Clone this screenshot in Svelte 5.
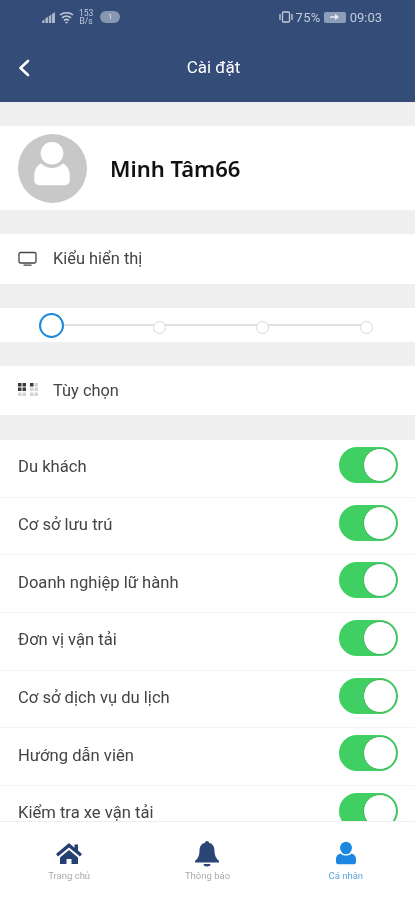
<script>
  const rows = ['Du khách','Cơ sở lưu trú','Doanh nghiệp lữ hành','Đơn vị vận tải','Cơ sở dịch vụ du lịch','Hướng dẫn viên','Kiểm tra xe vận tải'];
  const colsX = [1, 5.500, 13, 17.500];
  const rowsY = [0, 4.500, 9.500];
  const darkCells = ['0-0','1-0','0-1','1-1','2-0'];
</script>

<div class="app">
  <header class="top">
    <div class="status">
      <div class="st-left">
        <svg class="signal" width="13" height="11" viewBox="0 0 13 11"><path d="M0 11V9l2.500-1.500V11zM3.300 11V6.500L6 4.800V11zM6.800 11V4.200L9.300 2.500V11zM10 11V2l3-2v11z" fill="#a9b4c8"/></svg>
        <svg class="wifi" width="15" height="13" viewBox="0 0 15 13" fill="none" stroke="#c3cbd9" stroke-width="1.500"><path d="M1 4C4.500 1 10.500 1 14 4M3 6.800c2.700-2.200 6.300-2.200 9 0M5 9.300c1.500-1.100 3.500-1.100 5 0M6.500 11.500h2"/></svg>
        <div class="speed"><span>153</span><span>B/s</span></div>
        <span class="pill">1</span>
      </div>
      <div class="st-right">
        <svg width="14" height="12" viewBox="0 0 14 12" fill="none" stroke="#c3cbd9" stroke-width="1.300"><rect x="3.500" y="1" width="7" height="10" rx="1"/><path d="M1 3v6M13 3v6"/></svg>
        <span class="pct">75%</span>
        <span class="batt"><svg width="10" height="6" viewBox="0 0 10 6"><path d="M0 2.300h5V0l4 3-4 3V3.700H0z" fill="#e8ecf3"/></svg></span>
        <span>09:03</span>
      </div>
    </div>
    <div class="bar">
      <svg class="back" width="12" height="20" viewBox="0 0 12 20" fill="none" stroke="#fff" stroke-width="2.600" stroke-linecap="round" stroke-linejoin="round"><path d="M10 3 2.500 10 10 17"/></svg>
      <span class="title">Cài đặt</span>
    </div>
  </header>

  <main class="content">
    <section class="profile">
      <div class="avatar">
        <svg width="69" height="69" viewBox="0 0 70 70" fill="#fff"><g transform="translate(-.5 -2)"><circle cx="35" cy="21.500" r="11.500"/><path d="M24 32c3 3 7 4.500 11 4.500S43 35 46 32c4 2 7 6 7 12v5c0 3-2 5-5 5H22c-3 0-5-2-5-5v-5c0-6 3-10 7-12z"/></g></svg>
      </div>
      <span class="name">Minh Tâm66</span>
    </section>

    <section class="line">
      <svg width="20" height="16" viewBox="0 0 20 16" fill="none" stroke="#444" stroke-width="1.300"><rect x="1" y="1.500" width="17" height="10.500" rx="1.500"/><path d="M6 14.200h7" stroke-linecap="round"/></svg>
      <span>Kiểu hiển thị</span>
    </section>

    <section class="slider">
      <div class="track">
        <span class="dot active"></span>
        <span class="dot"></span>
        <span class="dot"></span>
        <span class="dot"></span>
      </div>
    </section>

    <section class="line opt">
      <svg class="grid-icon" width="22" height="14" viewBox="0 0 22 14">
        {#each rowsY as y, j}
          {#each colsX as x, i}
            <rect x={x} y={y} width="3.500" height="3.500" fill={darkCells.includes(`${i}-${j}`) ? '#3a3a3a' : '#d4d4d4'} />
          {/each}
        {/each}
      </svg>
      <span>Tùy chọn</span>
    </section>

    <section class="list">
      {#each rows as r}
        <div class="row">
          <span>{r}</span>
          <span class="switch"><span class="knob"></span></span>
        </div>
      {/each}
    </section>
  </main>

  <nav class="tabs">
    <div class="tab">
      <svg class="i-home" width="26" height="21" viewBox="0 0 26 21"><path d="M13 0 0 11l2 2.500L13 4.500l11 9 2-2.500-4-3.400V1.500h-3.500v3.200z" fill="#243f70"/><path d="M13 7 4 14.500V21h6.500v-5h5v5H22v-6.500z" fill="#243f70"/></svg>
      <span>Trang chủ</span>
    </div>
    <div class="tab">
      <svg class="i-bell" width="26" height="27" viewBox="0 0 26 26" fill="#2b4674"><circle cx="13" cy="2.500" r="2"/><path d="M13 2c5 0 7.500 3.500 7.500 8.500 0 4.500 1.500 7.500 4.500 10v1.500H1v-1.500c3-2.500 4.500-5.500 4.500-10C5.500 5.500 8 2 13 2z"/><path d="M9.500 23.500h7a3.500 2.500 0 0 1-7 0z"/></svg>
      <span>Thông báo</span>
    </div>
    <div class="tab on">
      <svg class="i-user" width="20" height="24" viewBox="0 0 22 25" fill="#1b87e0"><ellipse cx="11" cy="7" rx="6.500" ry="7"/><path d="M5 13c1.500 1.500 3.500 2.200 6 2.200s4.500-.7 6-2.200c3 .8 5 3 5 6v3c0 1.500-1 3-3 3H3c-2 0-3-1.500-3-3v-3c0-3 2-5.200 5-6z"/></svg>
      <span>Cá nhân</span>
    </div>
  </nav>
</div>

<style>
  :global(body) { margin: 0; }
  .app {
    width: 415px; height: 900px; display: flex; flex-direction: column; overflow: hidden;
    background: #efefef; font-family: Roboto, "Noto Sans", sans-serif; filter: blur(.35px);
  }
  .top { background: #344d78; height: 102px; flex: none; color: #fff; }
  .status {
    height: 34px; display: flex; justify-content: space-between; align-items: center;
    padding: 0 33px 0 42px; color: #c3cbd9; font-size: 13px;
  }
  .st-left, .st-right { display: flex; align-items: center; }
  .wifi { margin-left: 4px; }
  .speed { display: flex; flex-direction: column; font-size: 8.500px; line-height: 8.500px; margin-left: 5px; text-align: center; }
  .pill { margin-left: 7px; width: 20px; height: 12px; border-radius: 6px; background: #8797b2; color: #e2e7ef; font-size: 8px; line-height: 12px; text-align: center; }
  .pct { margin-left: 3px; letter-spacing: .3px; }
  .batt { width: 22px; height: 11px; margin: 0 4px 0 3px; border-radius: 2px; background: #8f9eb8; display: flex; align-items: center; justify-content: center; }
  .batt svg { display: block; }
  .bar { height: 68px; position: relative; display: flex; align-items: center; justify-content: center; padding: 0 0 3px 12px; box-sizing: border-box; }
  .back { position: absolute; left: 18px; top: 24px; }
  .title { font-size: 17px; }
  .content { flex: 1; min-height: 0; overflow: hidden; padding-top: 24px; }
  .profile { height: 84px; background: #fff; display: flex; align-items: center; padding-left: 18px; box-sizing: border-box; }
  .avatar { width: 69px; height: 69px; border-radius: 50%; background: #c8c8c8; overflow: hidden; flex: none; }
  .avatar svg { display: block; }
  .name { margin-left: 23px; color: #111; font-family: "Noto Sans", Roboto, sans-serif; font-weight: 600; font-size: 22px; }
  .line { background: #fff; height: 50px; display: flex; align-items: center; padding: 0 0 1px 18px; box-sizing: border-box; margin-top: 24px; color: #444; font-size: 16.400px; }
  .line span { margin-left: 15px; }
  .line svg { flex: none; }
  .line.opt { height: 49px; padding-left: 17px; }
  .line.opt span { margin-left: 14px; }
  .slider { background: #fff; height: 34px; margin-top: 24px; padding: 0 42px 0 39px; box-sizing: border-box; display: flex; align-items: center; }
  .track { flex: 1; display: flex; justify-content: space-between; align-items: center; position: relative; }
  .track::before { content: ""; position: absolute; left: 10px; right: 4px; top: 50%; height: 2px; margin-top: -1px; background: #e0e0e0; }
  .dot { position: relative; top: 2px; width: 13px; height: 13px; border-radius: 50%; border: 1.500px solid #d8d8d8; background: #fff; box-sizing: border-box; }
  .dot.active { top: 0; width: 25px; height: 25px; border: 2px solid #1f88d8; margin-right: -2px; }
  .list { background: #fff; margin-top: 25px; }
  .row { height: 57.700px; box-sizing: border-box; display: flex; align-items: center; justify-content: space-between; padding: 0 17px 3px 18px; color: #444; font-size: 16.600px; border-bottom: 1px solid #f4f4f4; }
  .switch { width: 59px; height: 36px; border-radius: 18px; background: #40cf63; position: relative; flex: none; margin-bottom: 4px; }
  .knob { position: absolute; right: 1px; top: 1px; width: 34px; height: 34px; box-sizing: border-box; border-radius: 50%; background: #fff; border: 1px solid #3bb65a; }
  .tabs { flex: none; height: 79px; background: #fff; border-top: 1px solid #efefef; box-sizing: border-box; display: grid; grid-template-columns: repeat(3, 1fr); padding-top: 15px; }
  .tab { display: flex; flex-direction: column; align-items: center; color: #aaa; font-size: 9.500px; height: 44px; justify-content: flex-end; gap: 3px; }
  .tab.on { color: #5aa6da; }
  .i-home { margin-bottom: 3px; }
  .i-user { margin-bottom: 2px; }
</style>
